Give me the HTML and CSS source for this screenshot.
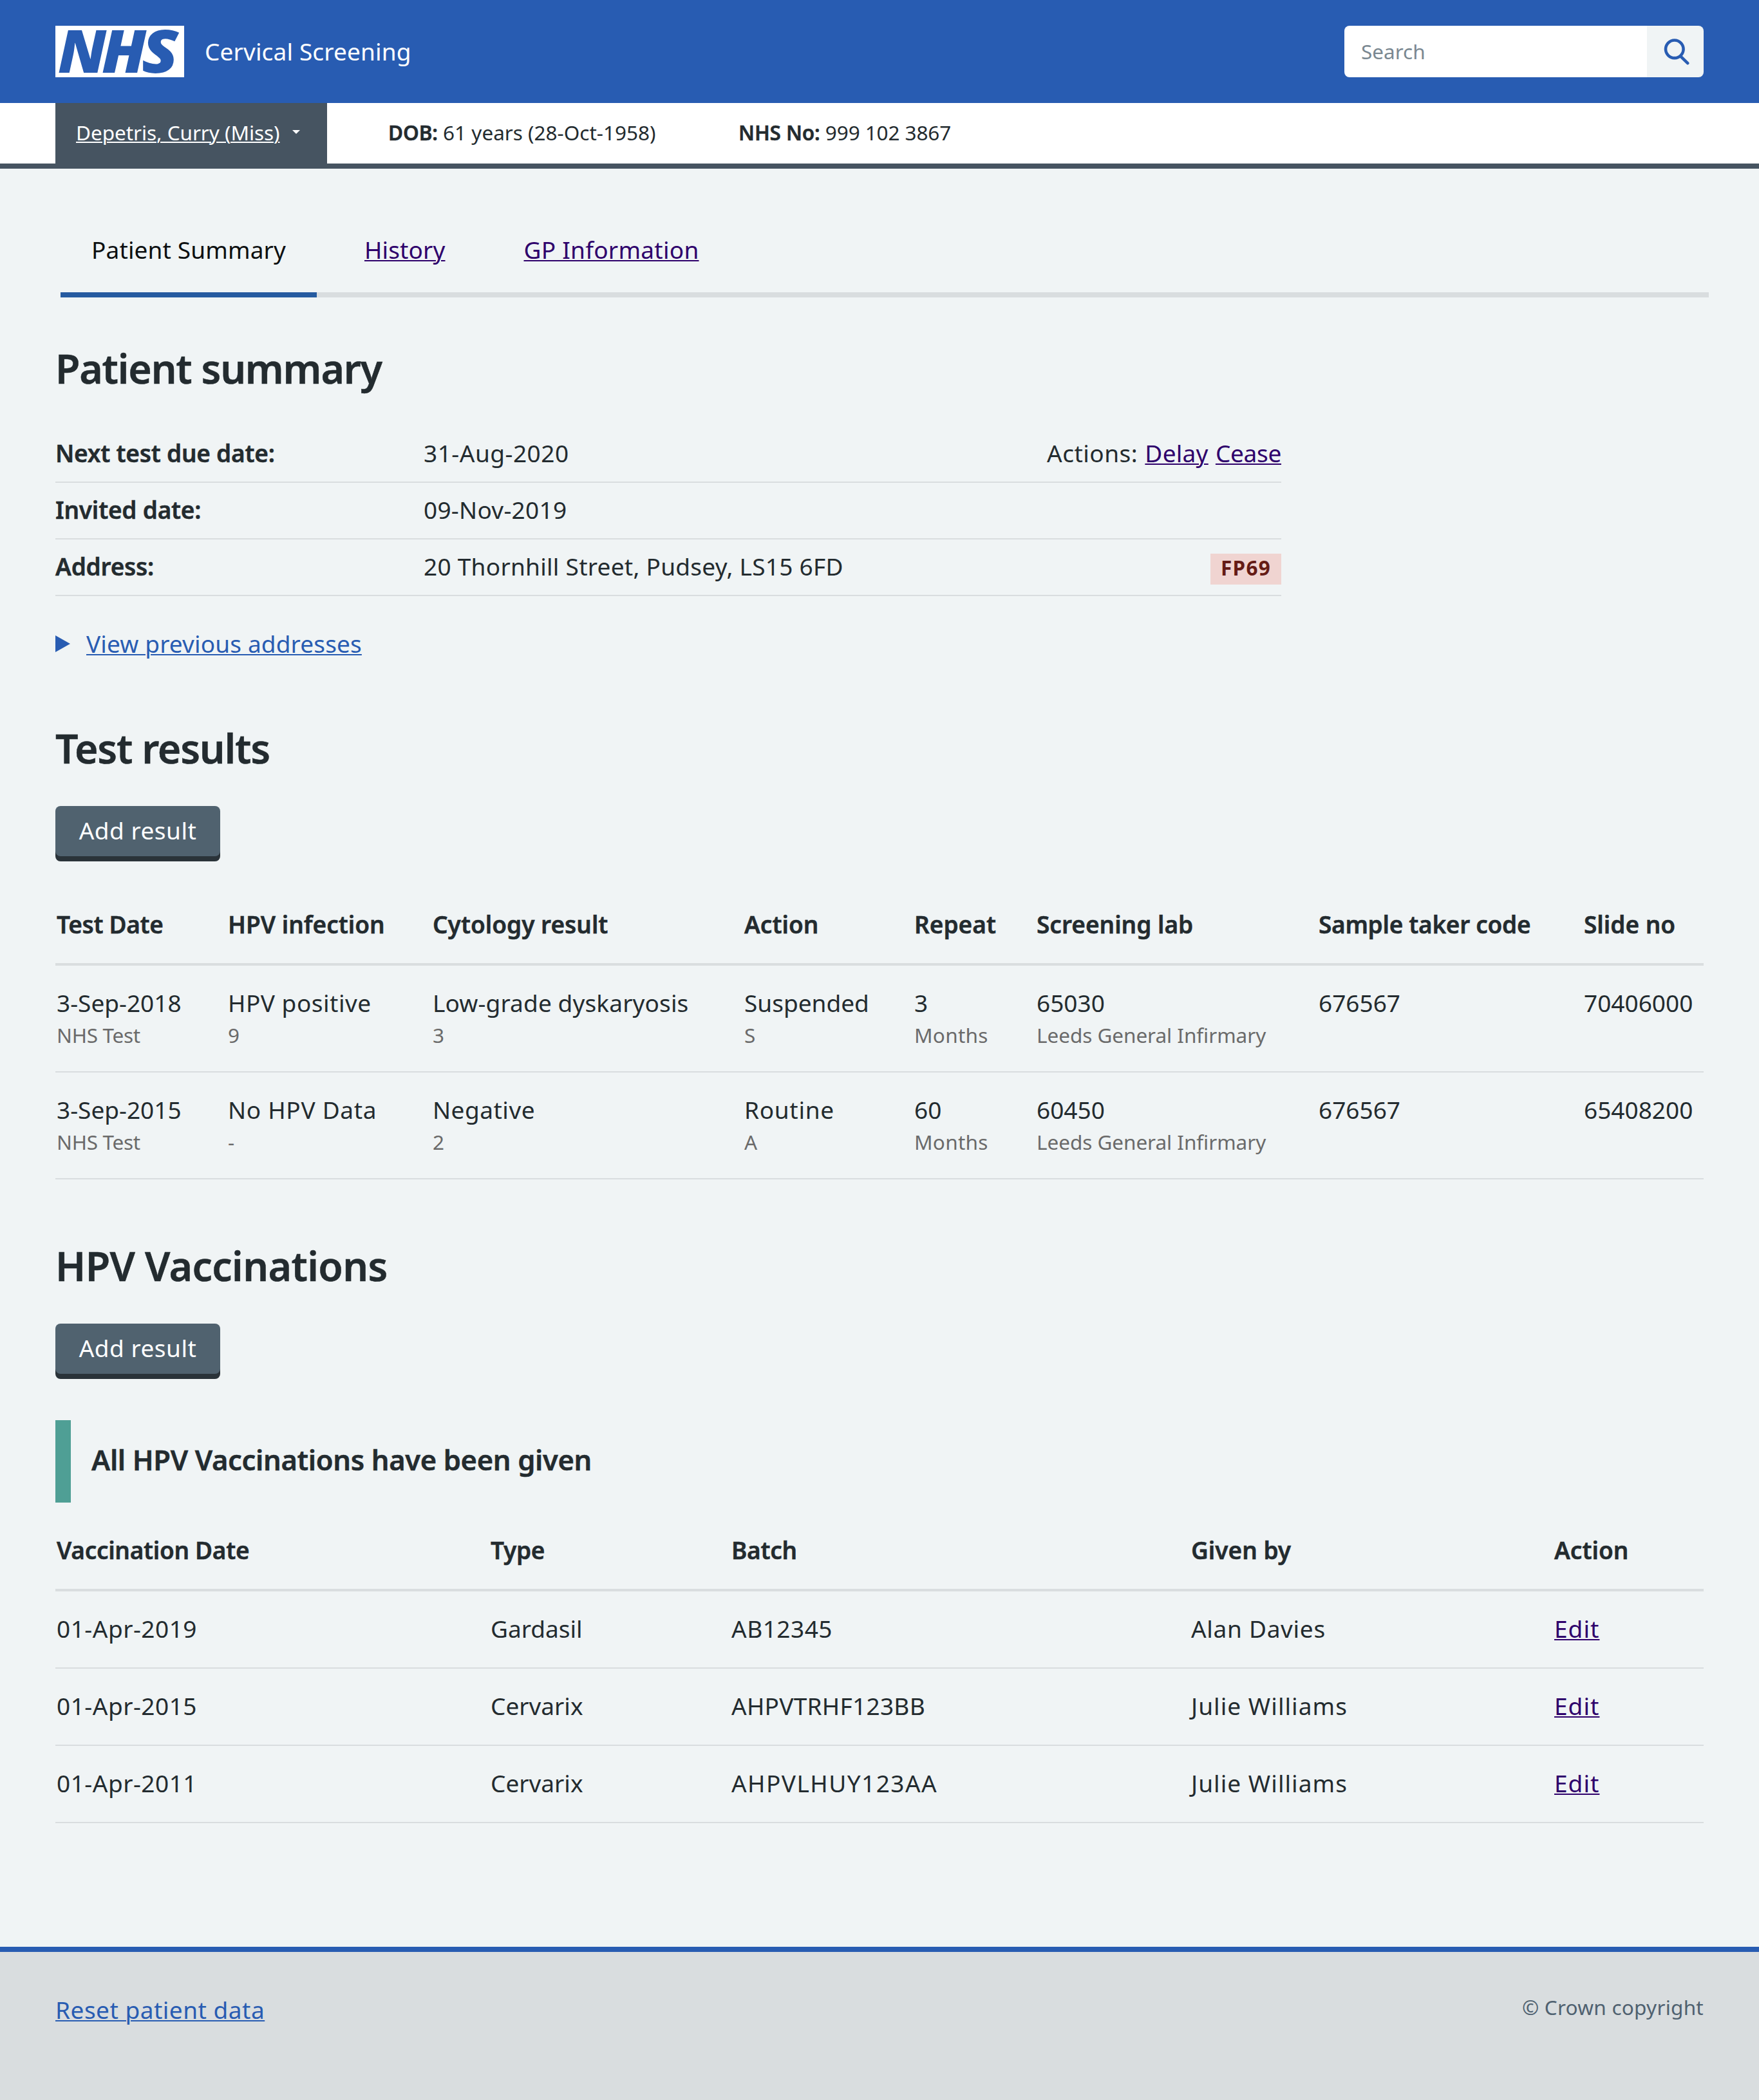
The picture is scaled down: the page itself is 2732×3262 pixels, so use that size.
FILE: index.html
```html
<!DOCTYPE html>
<html lang="en">
<head>
<meta charset="utf-8">
<title>Cervical Screening</title>
<link rel="stylesheet" href="styles.css">
</head>
<body>
<header class="header">
  <svg class="logo" viewBox="0 0 200 80" role="img" aria-label="NHS">
    <rect width="200" height="80" fill="#fff"/>
    <g class="logo-text">
      <text transform="translate(4 72.7) scale(1.04 1)">N</text>
      <text transform="translate(72 72.7) scale(1.06 1)">H</text>
      <text transform="translate(134 72.7) scale(1.14 1)">S</text>
    </g>
  </svg>
  <span class="service">Cervical Screening</span>
  <form class="search">
    <span class="search-field">Search</span>
    <span class="search-button">
      <svg width="44" height="44" viewBox="0 0 44 44" fill="none" stroke="#285cb2" stroke-width="4.6"><circle cx="20.8" cy="18.3" r="13.8"/><path d="M30.4 29.6 41.2 40.2" stroke-linecap="round"/></svg>
    </span>
  </form>
</header>
<div class="patient">
  <div class="patient-name"><a href="#">Depetris, Curry (Miss)</a><span class="caret"></span></div>
  <div class="patient-dob"><b>DOB:</b> 61 years (28-Oct-1958)</div>
  <div class="patient-no"><b>NHS No:</b> 999 102 3867</div>
</div>
<main class="main">
  <nav class="tabs">
    <span class="tab tab-current">Patient Summary</span>
    <span class="tab"><a href="#">History</a></span>
    <span class="tab"><a href="#" class="ls-2">GP Information</a></span>
  </nav>
  <h2>Patient summary</h2>
  <dl class="summary">
    <div class="row"><dt>Next test due date:</dt><dd class="ls-5">31-Aug-2020</dd><dd class="actions"><span class="ls-5">Actions:</span> <a href="#" class="ls-2">Delay</a> <a href="#" class="tight">Cease</a></dd></div>
    <div class="row"><dt>Invited date:</dt><dd class="ls-2">09-Nov-2019</dd></div>
    <div class="row"><dt>Address:</dt><dd class="ls-2">20 Thornhill Street, Pudsey, LS15 6FD</dd><dd class="actions"><span class="tag">FP69</span></dd></div>
  </dl>
  <div class="details"><span class="arrow"></span><a href="#">View previous addresses</a></div>

  <h2>Test results</h2>
  <button class="button">Add result</button>
  <table class="results">
    <colgroup><col class="r1"><col class="r2"><col class="r3"><col class="r4"><col class="r5"><col class="r6"><col class="r7"><col class="r8"></colgroup>
    <thead><tr><th class="tight">Test Date</th><th>HPV infection</th><th>Cytology result</th><th>Action</th><th>Repeat</th><th>Screening lab</th><th class="tight">Sample taker code</th><th>Slide no</th></tr></thead>
    <tbody>
      <tr>
        <td>3-Sep-2018<small class="tight">NHS Test</small></td>
        <td><span class="ls-5">HPV positive</span><small>9</small></td>
        <td><span class="ls-1">Low-grade dyskaryosis</span><small>3</small></td>
        <td>Suspended<small>S</small></td>
        <td>3<small class="ls-2">Months</small></td>
        <td>65030<small>Leeds General Infirmary</small></td>
        <td>676567</td>
        <td>70406000</td>
      </tr>
      <tr>
        <td>3-Sep-2015<small class="tight">NHS Test</small></td>
        <td><span class="ls-7">No HPV Data</span><small>-</small></td>
        <td><span class="ls-5">Negative</span><small>2</small></td>
        <td><span class="ls-7">Routine</span><small>A</small></td>
        <td>60<small class="ls-2">Months</small></td>
        <td>60450<small>Leeds General Infirmary</small></td>
        <td>676567</td>
        <td>65408200</td>
      </tr>
    </tbody>
  </table>

  <h2 class="ls-caps">HPV Vaccinations</h2>
  <button class="button">Add result</button>
  <p class="notice">All HPV Vaccinations have been given</p>
  <table class="vaccinations">
    <colgroup><col class="v1"><col class="v2"><col class="v3"><col class="v4"><col class="v5"></colgroup>
    <thead><tr><th class="tight">Vaccination Date</th><th class="tight">Type</th><th class="tight">Batch</th><th>Given by</th><th>Action</th></tr></thead>
    <tbody>
      <tr><td class="ls-5">01-Apr-2019</td><td>Gardasil</td><td class="ls-5">AB12345</td><td class="ls-7">Alan Davies</td><td class="ls-10"><a href="#">Edit</a></td></tr>
      <tr><td class="ls-5">01-Apr-2015</td><td>Cervarix</td><td class="ls-2">AHPVTRHF123BB</td><td class="ls-10">Julie Williams</td><td class="ls-10"><a href="#">Edit</a></td></tr>
      <tr><td class="ls-5">01-Apr-2011</td><td>Cervarix</td><td class="ls-15">AHPVLHUY123AA</td><td class="ls-10">Julie Williams</td><td class="ls-10"><a href="#">Edit</a></td></tr>
    </tbody>
  </table>
</main>
<footer class="footer">
  <a href="#" class="ls-5">Reset patient data</a>
  <span class="copyright">© Crown copyright</span>
</footer>
</body>
</html>
```
FILE: styles.css
```css
* { box-sizing: border-box; }
body {
  margin: 0;
  background: #f0f4f5;
  color: #232b2f;
  font: 37px/56px "Noto Sans", "Open Sans", sans-serif;
}
a {
  color: #2e006b;
  text-decoration: underline;
  text-decoration-thickness: 2px;
  text-underline-offset: 2px;
}
b, th, dt, h2, .notice { font-weight: 600; -webkit-text-stroke: 0.5px currentColor; }

.header {
  display: flex;
  align-items: center;
  height: 160px;
  padding: 0 86px;
  background: #285cb2;
  color: #fff;
}
.logo { width: 200px; height: 80px; margin-right: 32px; }
.logo-text { fill: #285cb2; font: italic 900 91.5px "Noto Sans", "Open Sans", sans-serif; }
.service { letter-spacing: 0.15px; }
.search {
  display: flex;
  width: 558px;
  height: 80px;
  margin-left: auto;
  border-radius: 8px;
  overflow: hidden;
  font-size: 31.5px;
  line-height: 80px;
}
.search-field { flex: 1; padding-left: 26px; background: #fff; color: #7a8891; }
.search-button { display: flex; align-items: center; justify-content: center; width: 88px; background: #f0f4f5; }

.patient {
  display: flex;
  height: 102px;
  padding: 0 86px;
  border-bottom: 8px solid #465461;
  background: #fff;
  font-size: 31.5px;
  line-height: 48px;
}
.patient > div { padding-top: 22px; }
.patient b { letter-spacing: -0.1px; }
.patient-name { display: flex; width: 422px; padding-left: 32px; background: #465461; }
.patient-name a { color: #fff; letter-spacing: -0.05px; }
.caret { margin: 20px 0 0 20px; width: 0; height: 0; border: 6.5px solid transparent; border-top-color: #fff; border-bottom: 0; }
.patient-dob { margin-left: 95px; width: 544px; }
.patient-no { letter-spacing: -0.1px; }

.main { padding: 98px 86px 192px; }
.tabs {
  display: flex;
  gap: 26px;
  margin: 0 -8px 0 8px;
  height: 102px;
  border-bottom: 8px solid #d9dddf;
}
.tab { height: 102px; padding: 0 48px; letter-spacing: 0.13px; }
.tab-current { color: #0c0f10; border-bottom: 8px solid #265ba0; }

h2 { margin: 98px 0 55px; font-size: 62.5px; line-height: 71px; letter-spacing: -1.2px; }
h2.ls-caps { letter-spacing: -0.6px; }
.tabs + h2 { margin-top: 74px; }

.summary { width: 1904px; margin: 0; }
.row { display: flex; height: 88px; padding-top: 14px; border-bottom: 2px solid #d9dddf; }
.row dt { width: 572px; letter-spacing: -0.22px; }
.row dd { margin: 0; }
.row .actions { margin-left: auto; word-spacing: 1.5px; }
.tag {
  display: block;
  width: 110px;
  height: 48px;
  margin-top: 8px;
  padding-left: 16px;
  background: #f0d4d1;
  color: #651b15;
  font-size: 31.5px;
  font-weight: 700;
  letter-spacing: 1.3px;
  line-height: 44px;
}
.details { display: flex; align-items: center; gap: 25px; margin-top: 46px; letter-spacing: 0.14px; }
.details a, .footer a { color: #285cb2; }
.arrow { width: 0; height: 0; border: 13.5px solid transparent; border-left: 23px solid #285cb2; border-right: 0; }

.button {
  display: block;
  width: 256px;
  height: 78px;
  padding: 0 0 2px;
  border: 0;
  border-radius: 8px;
  background: #50626f;
  box-shadow: 0 8px 0 #2a3339;
  color: #fff;
  font: inherit;
  letter-spacing: 0.5px;
  text-align: center;
}

table { width: 2560px; table-layout: fixed; border-collapse: separate; border-spacing: 0; }
th, td { padding: 30px 0 32px 2px; border-bottom: 2px solid #d9dddf; text-align: left; vertical-align: top; white-space: nowrap; }
th { padding-top: 0; border-bottom-width: 4px; }
.results { margin-top: 78px; }
.results td { padding-bottom: 34px; line-height: 55px; }
small { display: block; font-size: 31.5px; line-height: 45px; letter-spacing: -0.05px; color: #6a6a6a; }
.r1 { width: 266px; }
.r2 { width: 318px; }
.r3 { width: 484px; }
.r4 { width: 264px; }
.r5 { width: 190px; }
.r6 { width: 438px; }
.r7 { width: 412px; }
.r8 { width: 188px; }

.notice {
  height: 128px;
  margin: 72px 0 46px;
  padding: 29px 0 0 32px;
  border-left: 24px solid #4f9f95;
  font-size: 43.5px;
  letter-spacing: -0.35px;
  line-height: 64px;
}
.v1 { width: 674px; }
.v2 { width: 374px; }
.v3 { width: 714px; }
.v4 { width: 564px; }
.v5 { width: 234px; }

.footer {
  display: flex;
  justify-content: space-between;
  height: 238px;
  padding: 62px 86px 0;
  border-top: 8px solid #285cb2;
  background: #d9dddf;
}
.copyright { font-size: 31.5px; line-height: 48px; letter-spacing: 0.25px; color: #4f6170; }

/* tracking */
.tight { letter-spacing: -0.3px; }
.ls-1 { letter-spacing: 0.13px; }
.ls-2 { letter-spacing: 0.27px; }
.ls-5 { letter-spacing: 0.5px; }
.ls-7 { letter-spacing: 0.7px; }
.ls-10 { letter-spacing: 1.05px; }
.ls-15 { letter-spacing: 1.45px; }
```
